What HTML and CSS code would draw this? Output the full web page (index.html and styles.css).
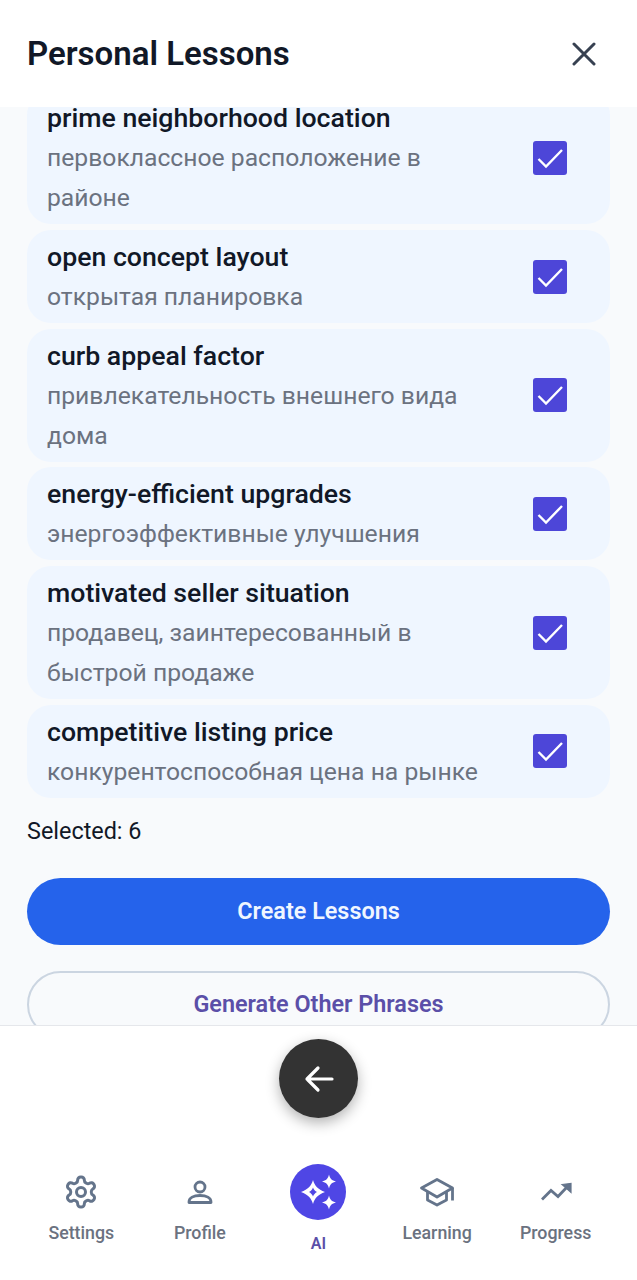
FILE: index.html
```html
<!DOCTYPE html>
<html lang="en">
<head>
    <meta charset="UTF-8">
    <meta name="viewport" content="width=device-width, initial-scale=1.0">
    <title>Personal Lessons</title>
    <link rel="stylesheet" href="styles.css">
</head>
<body>
    <div class="app">
        <header class="header">
            <h1>Personal Lessons</h1>
            <svg class="close-icon" viewBox="0 0 24 24" fill="none" stroke="#374151" stroke-width="3" stroke-linecap="round">
                <path d="M2 2 22 22M22 2 2 22"/>
            </svg>
        </header>

        <main class="content">
            <ul class="phrases">
                <li class="phrase">
                    <div class="phrase-text">
                        <h2>prime neighborhood location</h2>
                        <p>первоклассное расположение в районе</p>
                    </div>
                    <span class="check"><svg viewBox="0 0 34 34" fill="none" stroke="#fff" stroke-width="2.4"><path d="M5.500 18 13 25.500 29 9"/></svg></span>
                </li>
                <li class="phrase">
                    <div class="phrase-text">
                        <h2>open concept layout</h2>
                        <p>открытая планировка</p>
                    </div>
                    <span class="check"><svg viewBox="0 0 34 34" fill="none" stroke="#fff" stroke-width="2.4"><path d="M5.500 18 13 25.500 29 9"/></svg></span>
                </li>
                <li class="phrase">
                    <div class="phrase-text">
                        <h2>curb appeal factor</h2>
                        <p>привлекательность внешнего вида дома</p>
                    </div>
                    <span class="check"><svg viewBox="0 0 34 34" fill="none" stroke="#fff" stroke-width="2.4"><path d="M5.500 18 13 25.500 29 9"/></svg></span>
                </li>
                <li class="phrase">
                    <div class="phrase-text">
                        <h2>energy-efficient upgrades</h2>
                        <p>энергоэффективные улучшения</p>
                    </div>
                    <span class="check"><svg viewBox="0 0 34 34" fill="none" stroke="#fff" stroke-width="2.4"><path d="M5.500 18 13 25.500 29 9"/></svg></span>
                </li>
                <li class="phrase">
                    <div class="phrase-text">
                        <h2>motivated seller situation</h2>
                        <p>продавец, заинтересованный в быстрой продаже</p>
                    </div>
                    <span class="check"><svg viewBox="0 0 34 34" fill="none" stroke="#fff" stroke-width="2.4"><path d="M5.500 18 13 25.500 29 9"/></svg></span>
                </li>
                <li class="phrase">
                    <div class="phrase-text">
                        <h2>competitive listing price</h2>
                        <p>конкурентоспособная цена на рынке</p>
                    </div>
                    <span class="check"><svg viewBox="0 0 34 34" fill="none" stroke="#fff" stroke-width="2.4"><path d="M5.500 18 13 25.500 29 9"/></svg></span>
                </li>
            </ul>
            <p class="selected">Selected: 6</p>
            <button class="btn btn-primary">Create Lessons</button>
            <button class="btn btn-outline">Generate Other Phrases</button>
        </main>

        <footer class="footer">
            <button class="fab" aria-label="Back">
                <svg viewBox="0 0 32 32" fill="none" stroke="#fff" stroke-width="3.200" stroke-linecap="round" stroke-linejoin="round">
                    <path d="M29 16H4M15 5 4 16l11 11"/>
                </svg>
            </button>
            <nav class="nav">
                <a class="nav-item">
                    <svg class="nav-icon" viewBox="0 0 24 24" fill="none" stroke="#64748b" stroke-width="2" stroke-linejoin="round">
                        <path d="M12.220 2h-.44a2 2 0 0 0-2 2v.18a2 2 0 0 1-1 1.730l-.43.25a2 2 0 0 1-2 0l-.15-.08a2 2 0 0 0-2.730.73l-.22.38a2 2 0 0 0 .73 2.730l.15.1a2 2 0 0 1 1 1.720v.51a2 2 0 0 1-1 1.740l-.15.09a2 2 0 0 0-.73 2.730l.22.38a2 2 0 0 0 2.730.73l.15-.08a2 2 0 0 1 2 0l.43.25a2 2 0 0 1 1 1.730V20a2 2 0 0 0 2 2h.44a2 2 0 0 0 2-2v-.18a2 2 0 0 1 1-1.730l.43-.25a2 2 0 0 1 2 0l.15.08a2 2 0 0 0 2.730-.73l.22-.39a2 2 0 0 0-.73-2.730l-.15-.08a2 2 0 0 1-1-1.740v-.5a2 2 0 0 1 1-1.740l.15-.09a2 2 0 0 0 .73-2.730l-.22-.38a2 2 0 0 0-2.730-.73l-.15.08a2 2 0 0 1-2 0l-.43-.25a2 2 0 0 1-1-1.730V4a2 2 0 0 0-2-2z"/>
                        <circle cx="12" cy="12" r="3"/>
                    </svg>
                    <span>Settings</span>
                </a>
                <a class="nav-item">
                    <svg class="nav-icon" viewBox="0 0 36 36" fill="none" stroke="#64748b" stroke-width="2.800" stroke-linejoin="round">
                        <circle cx="18" cy="13" r="5"/>
                        <path d="M7 28.500v-.5c0-4 4.500-6.500 11-6.500s11 2.500 11 6.500v.5z"/>
                    </svg>
                    <span>Profile</span>
                </a>
                <a class="nav-item nav-item-active">
                    <span class="ai-circle">
                        <svg viewBox="0 0 56 56" fill="#fff">
                            <path fill-rule="evenodd" d="M23 16c1.800 6.200 4.800 9.200 12 12-7.200 2.800-10.200 5.800-12 12-1.800-6.200-4.800-9.200-12-12 7.200-2.800 10.200-5.800 12-12zm0 7.500c-.8 2-2.100 3.500-4 4.500 1.900 1 3.200 2.500 4 4.500.8-2 2.100-3.500 4-4.500-1.900-1-3.200-2.500-4-4.500z"/>
                            <path d="M39 10.500c1 4.200 2.800 6 7 7-4.200 1-6 2.800-7 7-1-4.200-2.800-6-7-7 4.200-1 6-2.800 7-7zM39 31.500c1 4.200 2.800 6 7 7-4.200 1-6 2.800-7 7-1-4.200-2.800-6-7-7 4.200-1 6-2.800 7-7z"/>
                        </svg>
                    </span>
                    <span>AI</span>
                </a>
                <a class="nav-item">
                    <svg class="nav-icon" viewBox="0 0 36 36" fill="none" stroke="#64748b" stroke-width="2.800" stroke-linejoin="round">
                        <path d="M18 5.500 2.500 14 18 23l15.500-9z"/>
                        <path d="M8.500 18v8l9.500 5 9.500-5v-8"/>
                        <path d="M33.500 14v12.500"/>
                    </svg>
                    <span>Learning</span>
                </a>
                <a class="nav-item">
                    <svg class="nav-icon" viewBox="0 0 36 36" fill="#64748b" stroke="#64748b" stroke-width="2.800">
                        <path d="M4 25.500 13 16.500l7 6L30 12" fill="none"/>
                        <path d="M24 10.500 33 9.500v9z" stroke-width="1.200"/>
                    </svg>
                    <span>Progress</span>
                </a>
            </nav>
        </footer>
    </div>
</body>
</html>
```

FILE: styles.css
```css
/* Reset some default styles */
body, h1, h2, p, ul {
    margin: 0;
    padding: 0;
}

body {
    font-family: Roboto, "Liberation Sans", sans-serif;
    background-color: #fff;
    color: #111827;
}

/* Page frame */
.app {
    display: flex;
    flex-direction: column;
    height: 1280px;
    overflow: hidden;
}

/* Header styling */
.header {
    flex: 0 0 107px;
    display: flex;
    align-items: center;
    justify-content: space-between;
    padding: 0 41px 0 27px;
    box-sizing: border-box;
    background-color: #fff;
}

.header h1 {
    font-size: 33px;
    font-weight: 600;
    color: #111827;
}

.close-icon {
    width: 24px;
    height: 24px;
}

/* Scrolled list area */
.content {
    flex: 1;
    min-height: 0;
    overflow: hidden;
    padding: 0 27px;
    background-color: #f8fafc;
}

.phrases {
    list-style: none;
    display: flex;
    flex-direction: column;
    gap: 5.7px;
    margin-top: -15.7px;
}

.phrase {
    display: flex;
    align-items: center;
    justify-content: space-between;
    padding: 11px 43px 6px 20px;
    background-color: #eff6ff;
    border-radius: 24px;
}

.phrase-text {
    width: 440px;
}

.phrase h2 {
    font-size: 26.7px;
    font-weight: 550;
    line-height: 32px;
}

.phrase p {
    margin-top: 4px;
    font-size: 24.7px;
    line-height: 40px;
    color: #6b7280;
}

.check {
    flex: 0 0 34px;
    height: 34px;
    margin-bottom: 5px;
    background-color: #4d46d8;
    border-radius: 3px;
}

.check svg {
    display: block;
    width: 34px;
    height: 34px;
}

.selected {
    margin-top: 20px;
    font-size: 23.4px;
    line-height: 27px;
    color: #111827;
}

/* Buttons */
.btn {
    display: block;
    width: 100%;
    height: 67px;
    border-radius: 34px;
    font-family: inherit;
    font-size: 23.4px;
    font-weight: 600;
    cursor: pointer;
}

.btn-primary {
    margin-top: 33px;
    background-color: #2563eb;
    color: #eff6ff;
    border: none;
}

.btn-outline {
    margin-top: 26px;
    background-color: transparent;
    color: #5b4fa8;
    border: 2px solid #cbd5e1;
}

/* Footer styling */
.footer {
    flex: 0 0 255px;
    position: relative;
    display: flex;
    flex-direction: column;
    justify-content: flex-end;
    box-sizing: border-box;
    background-color: #fff;
    border-top: 1px solid #e5e7eb;
}

.fab {
    position: absolute;
    left: 279px;
    top: 13px;
    width: 79px;
    height: 79px;
    display: flex;
    align-items: center;
    justify-content: center;
    padding: 0;
    background-color: #333;
    border: none;
    border-radius: 50%;
    box-shadow: 0 5px 14px rgba(0, 0, 0, 0.3);
}

.fab svg {
    width: 32px;
    height: 32px;
}

.nav {
    display: grid;
    grid-template-columns: repeat(5, 1fr);
    height: 116px;
    padding: 0 22px;
}

.nav-item {
    display: flex;
    flex-direction: column;
    align-items: center;
    padding-top: 10px;
    font-size: 17.8px;
    font-weight: 500;
    color: #6b7280;
}

.nav-icon {
    width: 36px;
    height: 36px;
    margin-bottom: 12px;
}

.ai-circle {
    width: 56px;
    height: 56px;
    margin: -10px 0 14px;
    background-color: #4f46e5;
    border-radius: 50%;
}

.ai-circle svg {
    display: block;
    width: 56px;
    height: 56px;
}

.nav-item-active {
    color: #5b4fa8;
    font-weight: 600;
    font-size: 16px;
}
```
